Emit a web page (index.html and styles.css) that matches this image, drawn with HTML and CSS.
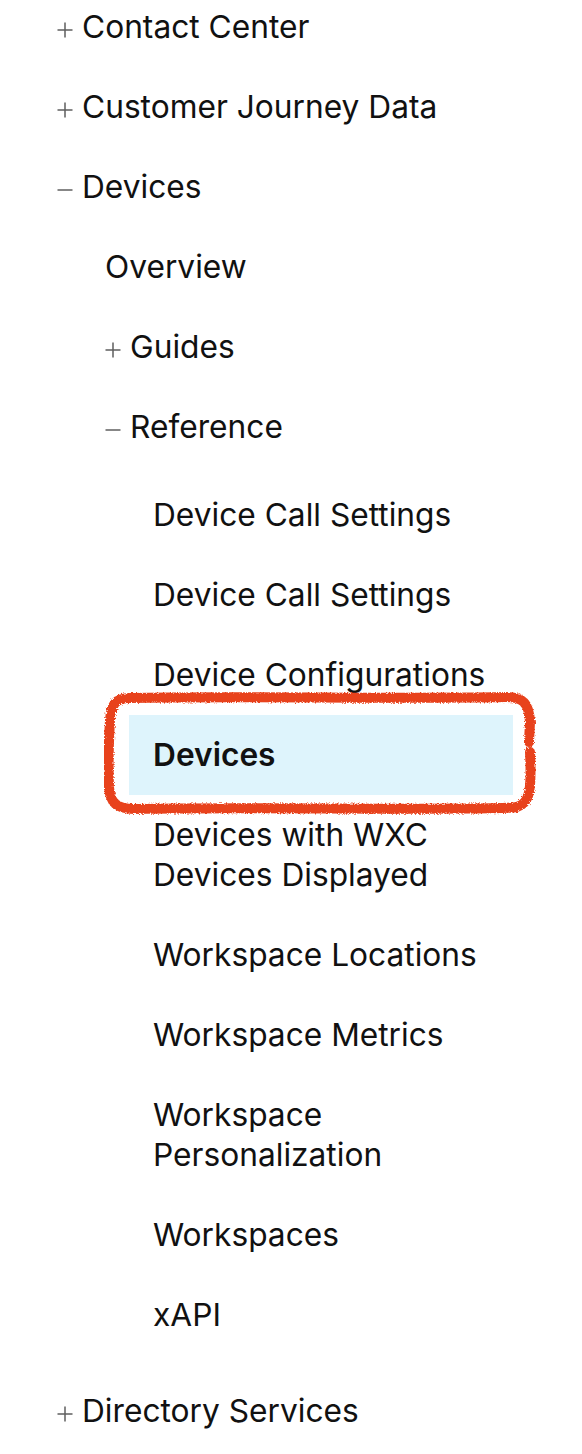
FILE: index.html
```html
<!DOCTYPE html>
<html lang="en">
<head>
<meta charset="utf-8">
<title>Navigation</title>
<link rel="stylesheet" href="styles.css">
</head>
<body>
<nav class="nav">
  <ul class="tree level-1">
    <li class="item"><span class="row"><span class="toggle"><svg viewBox="0 0 16 16" width="16" height="16"><path d="M0.5 8H15.5M8 0.5V15.5"/></svg></span>Contact Center</span></li>
    <li class="item"><span class="row"><span class="toggle"><svg viewBox="0 0 16 16" width="16" height="16"><path d="M0.5 8H15.5M8 0.5V15.5"/></svg></span>Customer Journey Data</span></li>
    <li class="item">
      <span class="row"><span class="toggle"><svg viewBox="0 0 16 16" width="16" height="16"><path d="M0.5 8H15.5"/></svg></span>Devices</span>
      <ul class="tree level-2">
        <li class="item"><span class="row">Overview</span></li>
        <li class="item"><span class="row"><span class="toggle"><svg viewBox="0 0 16 16" width="16" height="16"><path d="M0.5 8H15.5M8 0.5V15.5"/></svg></span>Guides</span></li>
        <li class="item">
          <span class="row"><span class="toggle"><svg viewBox="0 0 16 16" width="16" height="16"><path d="M0.5 8H15.5"/></svg></span>Reference</span>
          <ul class="tree level-3">
            <li class="item"><span class="row">Device Call Settings</span></li>
            <li class="item"><span class="row">Device Call Settings</span></li>
            <li class="item"><span class="row">Device Configurations</span></li>
            <li class="item active">
              <span class="row">Devices</span>
              <svg class="scribble" viewBox="0 0 432 124" width="432" height="124" aria-hidden="true">
                <defs>
                  <filter id="rough" x="-5%" y="-10%" width="110%" height="120%">
                    <feTurbulence type="fractalNoise" baseFrequency="0.8" numOctaves="2" seed="3" result="noise"/>
                    <feDisplacementMap in="SourceGraphic" in2="noise" scale="4"/>
                  </filter>
                </defs>
                <path filter="url(#rough)" d="M426 60 C427 80 427 96 424 104 C420 116 410 116 398 116 C300 118 150 115 30 117 C12 117 6 110 5 95 C4 70 5 45 6 28 C7 12 12 6 26 6 C120 4 300 7 402 5 C420 5 425 12 426 30 L425 50"/>
              </svg>
            </li>
            <li class="item"><span class="row">Devices with WXC Devices Displayed</span></li>
            <li class="item"><span class="row">Workspace Locations</span></li>
            <li class="item"><span class="row">Workspace Metrics</span></li>
            <li class="item"><span class="row">Workspace Personalization</span></li>
            <li class="item"><span class="row">Workspaces</span></li>
            <li class="item"><span class="row">xAPI</span></li>
          </ul>
        </li>
      </ul>
    </li>
    <li class="item"><span class="row"><span class="toggle"><svg viewBox="0 0 16 16" width="16" height="16"><path d="M0.5 8H15.5M8 0.5V15.5"/></svg></span>Directory Services</span></li>
  </ul>
</nav>
</body>
</html>
```

FILE: styles.css
```css
html, body {
  margin: 0;
  padding: 0;
  background: #ffffff;
}

body {
  font-family: Inter, "Liberation Sans", sans-serif;
  font-size: 31.7px;
  line-height: 40px;
  color: #111111;
  overflow: hidden;
}

.nav {
  width: 513px;
  margin-top: -13px;
}

.tree {
  list-style: none;
  margin: 0;
  padding: 0;
}

.level-1 {
  padding-left: 57px;
}

.level-2 {
  padding-left: 48px;
  padding-bottom: 8px;
}

.level-3 {
  padding-left: 48px;
  padding-top: 8px;
  padding-bottom: 8px;
}

.item {
  position: relative;
}

.row {
  display: flex;
  align-items: center;
  padding: 20px 0;
}

.toggle {
  display: inline-flex;
  align-items: center;
  width: 25px;
  flex: none;
  padding-top: 5px;
}

.toggle svg {
  display: block;
  fill: none;
  stroke: #5f5f5f;
  stroke-width: 1.5;
}

.active .row {
  margin-left: -24px;
  padding-left: 24px;
  background: #def4fc;
  font-weight: 600;
}

.scribble {
  position: absolute;
  left: -49px;
  top: -23px;
  fill: none;
  stroke: #e8421d;
  stroke-width: 10;
  stroke-linecap: round;
  pointer-events: none;
}
```
